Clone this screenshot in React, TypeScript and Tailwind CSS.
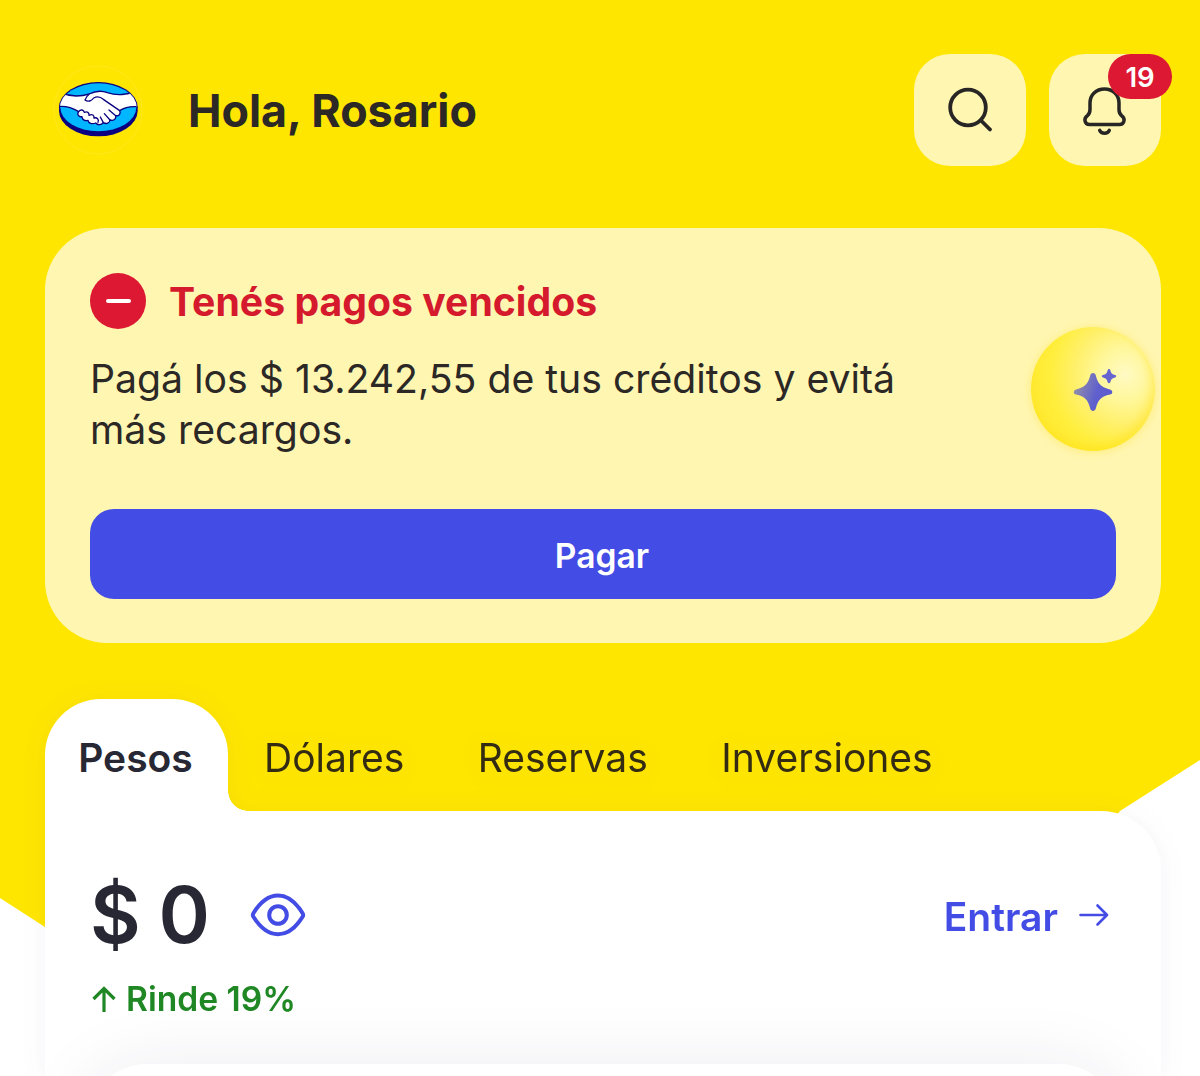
import { useState } from "react";

const TABS = ["Pesos", "Dólares", "Reservas", "Inversiones"];

const HandshakeLogo = () => (
  <svg viewBox="39 30 270 270" className="h-[90px] w-[90px] shrink-0" fill="none">
    <defs>
      <clipPath id="badge">
        <ellipse cx="175" cy="157" rx="115" ry="73" />
      </clipPath>
    </defs>
    <circle cx="174" cy="165" r="132" stroke="#ffe91f" strokeWidth="3" />
    <ellipse cx="175" cy="167" rx="118" ry="77" fill="#0a0080" />
    <ellipse cx="175" cy="157" rx="118" ry="76" fill="#0a0080" />
    <ellipse cx="175" cy="157" rx="114" ry="72" fill="#00b6ff" />
    <g clipPath="url(#badge)" stroke="#0a0080" strokeWidth="4" strokeLinecap="round" strokeLinejoin="round">
      <path
        fill="#fff"
        d="M50 108 C85 126 118 126 148 117 C165 108 184 106 202 113 C232 123 258 120 300 106 L300 156 C272 152 254 157 239 167 C243 176 237 184 227 182 C229 192 221 199 210 195 C209 205 199 208 190 203 C184 211 173 211 167 204 C156 209 145 204 144 196 C134 199 126 193 126 185 C116 187 110 178 116 170 C97 158 78 151 50 155 Z"
      />
      <path
        fill="#fff"
        d="M148 117 C142 121 138 129 135 135 C144 142 155 138 161 129 C170 124 182 126 190 133 L239 167"
      />
      <path d="M116 170 C122 162 131 164 133 172 C142 168 148 173 147 181 C157 176 163 181 162 189 C171 186 178 193 174 202" />
      <path d="M207 165 L227 182 M193 176 L210 195 M181 186 L190 203" />
    </g>
  </svg>
);

const SearchIcon = () => (
  <svg viewBox="0 0 48 48" className="h-12 w-12" fill="none" stroke="#282624" strokeWidth="3.8" strokeLinecap="round">
    <circle cx="22" cy="21.5" r="17.8" />
    <path d="M35 34.5 L44 43.5" />
  </svg>
);

const BellIcon = () => (
  <svg viewBox="0 0 48 52" className="h-[52px] w-12" fill="none" stroke="#282624" strokeWidth="3.5" strokeLinecap="round" strokeLinejoin="round">
    <path d="M23.5 5 C15 5 9 11 9 19 V25.5 C9 28.5 8.2 30 6.4 31.6 C4.4 33.2 3.6 35 4 36.8 C4.4 39.3 6.2 40.6 8.6 40.6 H38.4 C40.8 40.6 42.6 39.3 43 36.8 C43.4 35 42.6 33.2 40.6 31.6 C38.8 30 38 28.5 38 25.5 V19 C38 11 32 5 23.5 5 Z" />
    <path d="M18.7 46.4 C20.3 50.2 26.7 50.2 28.3 46.4" />
  </svg>
);

const SparkleIcon = () => (
  <svg viewBox="0 0 46 46" className="h-[46px] w-[46px]">
    <defs>
      <linearGradient id="sparkle" x1="0" y1="0.3" x2="1" y2="0.6">
        <stop offset="0" stopColor="#9792a4" />
        <stop offset="0.6" stopColor="#5f60cd" />
        <stop offset="1" stopColor="#5c5ad0" />
      </linearGradient>
    </defs>
    <path
      fill="url(#sparkle)"
      d="M20 6 C21.6 6 22.4 7 22.8 8.6 C25 17 28 20.4 37 22.4 C40 23.2 40 26.8 37 27.6 C28 29.6 25 33 22.8 41.4 C22 44.7 18 44.7 17.2 41.4 C15 33 12 29.6 3 27.6 C0 26.8 0 23.2 3 22.4 C12 20.4 15 17 17.2 8.6 C17.6 7 18.4 6 20 6 Z"
    />
    <path
      fill="#6664d0"
      d="M36 2 C36.8 2 37.1 2.6 37.3 3.3 C38.2 6.6 39 7.3 42.2 8.1 C43.6 8.6 43.6 9.9 42.2 10.4 C39 11.2 38.2 12 37.3 15.2 C36.9 16.6 35.1 16.6 34.7 15.2 C33.8 12 33 11.2 29.8 10.4 C28.4 9.9 28.4 8.6 29.8 8.1 C33 7.3 33.8 6.6 34.7 3.3 C34.9 2.6 35.2 2 36 2 Z"
    />
  </svg>
);

const EyeIcon = () => (
  <svg viewBox="0 0 56 44" className="h-11 w-14" fill="none" stroke="#434ce4" strokeWidth="4" strokeLinejoin="round">
    <path d="M3.4 20.2 C9.5 10.5 17.5 2.6 28 2.6 C38.5 2.6 46.5 10.5 52.6 20.2 C53.4 21.5 53.4 22.5 52.6 23.8 C46.5 33.5 38.5 41.2 28 41.2 C17.5 41.2 9.5 33.5 3.4 23.8 C2.6 22.5 2.6 21.5 3.4 20.2 Z" />
    <circle cx="28" cy="22" r="8.8" />
  </svg>
);

const Header = () => (
  <header className="flex h-28 items-center pl-2">
    <HandshakeLogo />
    <h1 className="ml-[45px] flex-1 pt-0.5 text-[44.8px] leading-none font-bold">Hola, Rosario</h1>
    <button className="flex h-28 w-28 items-center justify-center rounded-[36px] bg-[#fff6b2]">
      <SearchIcon />
    </button>
    <button className="relative ml-[23px] flex h-28 w-28 items-center justify-center rounded-[36px] bg-[#fff6b2]">
      <BellIcon />
      <span className="absolute top-0 -right-[11px] flex h-[45px] w-16 items-center justify-center rounded-full bg-[#dc1832] pt-0.5 text-[27.5px] font-semibold text-white">
        19
      </span>
    </button>
  </header>
);

const OverdueCard = () => (
  <section className="relative mt-[62px] h-[415px] rounded-[62px] bg-[#fff6b2] p-[45px]">
    <div className="flex items-center gap-[23px]">
      <span className="flex h-14 w-14 items-center justify-center rounded-full bg-[#dc1832]">
        <span className="h-1 w-[25px] rounded-full bg-white" />
      </span>
      <h2 className="pt-0.5 text-[39.2px] leading-none font-bold text-[#d41a2c]">Tenés pagos vencidos</h2>
    </div>
    <p className="mt-6 w-[860px] text-[39.2px] leading-[51px]">
      Pagá los $ 13.242,55 de tus créditos y evitá más recargos.
    </p>
    <button className="mt-[54px] flex h-[90px] w-full items-center justify-center rounded-[24px] bg-[#434ce4] pt-1 pr-0.5 text-[33.6px] font-semibold text-white">
      Pagar
    </button>
    <div className="absolute top-[99px] right-[6px] flex h-[124px] w-[124px] items-center justify-center rounded-full bg-[radial-gradient(circle_at_76%_38%,#fffac4_0%,#fff79a_22%,#fff06a_42%,#ffee3c_62%,#ffe628_90%)] pt-0.5 pl-1.5 shadow-[0_1px_10px_rgba(255,220,0,0.35),inset_-4px_-5px_8px_rgba(255,222,0,0.35)]">
      <SparkleIcon />
    </div>
  </section>
);

const AccountPanel = () => {
  const [tab, setTab] = useState("Pesos");
  const [hidden, setHidden] = useState(false);

  return (
    <section className="mt-14 flex flex-1 flex-col drop-shadow-[0_2px_12px_rgba(60,60,140,0.06)]">
      <nav className="flex h-28 text-[39px]">
        {TABS.map((name) => (
          <button
            key={name}
            onClick={() => setTab(name)}
            className={
              name === tab
                ? "relative mr-[36px] w-[183px] rounded-t-[56px] bg-white pt-1.5 pr-0.5 font-semibold text-[#282834]"
                : "mr-[73.5px] pt-1.5 text-[#332b12]"
            }
          >
            {name}
            {name === tab && (
              <span className="absolute bottom-0 left-full h-5 w-5 bg-[radial-gradient(circle_at_100%_0,transparent_19.5px,#fff_20px)]" />
            )}
          </button>
        ))}
      </nav>
      <div className="flex flex-1 flex-col overflow-hidden rounded-tr-[60px] bg-white px-[45px] pt-[62px] text-[#282834]">
        <div className="flex h-[84px] items-center">
          <span className="text-[78px] leading-none font-semibold tracking-[-1px]">{hidden ? "***" : "$ 0"}</span>
          <button className="ml-[41px]" onClick={() => setHidden(!hidden)}>
            <EyeIcon />
          </button>
          <a className="mr-[7px] ml-auto flex items-center gap-[21px] text-[39px] font-semibold text-[#434ce4]">
            <span className="pt-1">Entrar</span>
            <svg viewBox="0 0 30 24" className="h-6 w-[30px]" fill="none" stroke="currentColor" strokeWidth="2.6" strokeLinecap="round" strokeLinejoin="round">
              <path d="M1.5 12 H28 M18.5 2.5 L28 12 L18.5 21.5" />
            </svg>
          </a>
        </div>
        <p className="mt-[17px] flex items-center gap-[10px] pl-0.5 text-[33.6px] font-semibold text-[#1f8723]">
          <svg viewBox="0 0 24 26" className="h-[26px] w-6" fill="none" stroke="currentColor" strokeWidth="3.2">
            <path d="M12 26 V2.5 M1.5 13 L12 2.5 L22.5 13" />
          </svg>
          Rinde 19%
        </p>
        <div className="mt-auto h-3 shrink-0">
          <div className="h-40 rounded-[56px] bg-white shadow-[0_12px_80px_rgba(40,40,90,0.11)]" />
        </div>
      </div>
    </section>
  );
};

export default function App() {
  return (
    <main className="relative isolate flex h-[1076px] w-[1200px] flex-col overflow-hidden bg-white pt-[54px] pr-[39px] pl-[45px] font-['Inter',sans-serif] text-[#2b2826]">
      <div className="absolute inset-0 -z-10 bg-[#ffe600] [clip-path:polygon(0_0,100%_0,100%_760px,1120px_811px,1000px_960px,96px_960px,0_898px)]" />
      <Header />
      <OverdueCard />
      <AccountPanel />
    </main>
  );
}
